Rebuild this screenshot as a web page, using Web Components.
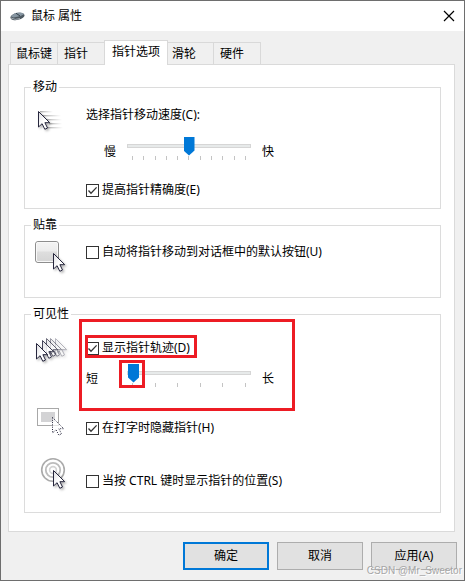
<!DOCTYPE html>
<html lang="zh-CN">
<head>
<meta charset="utf-8">
<meta name="viewport" content="width=device-width, initial-scale=1">
<title>鼠标 属性</title>
<style>
html, body { margin: 0; min-height: 100%; }
body {
  display: flex; min-height: 100vh; background: #f0f0f0; color: #000;
  font: 12px/16px "Noto Sans", "Noto Sans CJK SC", sans-serif;
}
</style>
</head>
<body>
<mouse-dialog></mouse-dialog>

<script>
const define = (name, html, setup) => {
  const template = document.createElement('template');
  template.innerHTML = html;
  customElements.define(name, class extends HTMLElement {
    constructor() {
      super();
      this.attachShadow({ mode: 'open' }).append(template.content.cloneNode(true));
    }
    connectedCallback() { if (setup) setup(this, this.shadowRoot); }
  });
};

/* Icons. "cursor" is shared by most of them. */
const cursor = (x, y, extra = 'fill="url(#g)" stroke="#26263c"') =>
  `<path transform="translate(${x} ${y})" ${extra} d="M0 0V15.5L3.6 12.2L6.3 17.8L9 16.5L6.4 11.2H11.2Z"/>`;
const defs = `<defs>
  <linearGradient id="g" x1="0" y1="0" x2="1" y2="1"><stop offset="0" stop-color="#dcdce0"/><stop offset=".5" stop-color="#fff"/></linearGradient>
  <linearGradient id="b" x1="0" y1="0" x2="0" y2="1"><stop offset="0" stop-color="#f4f4f4"/><stop offset=".45" stop-color="#ececec"/><stop offset=".5" stop-color="#dedede"/><stop offset="1" stop-color="#d4d4d4"/></linearGradient>
  <linearGradient id="f"><stop offset="0" stop-color="#aaa"/><stop offset="1" stop-color="#bbb" stop-opacity="0"/></linearGradient>
  <filter id="s" x="-30%" y="-30%" width="180%" height="180%"><feDropShadow dx="1.5" dy="1.5" stdDeviation="1.2" flood-opacity=".3"/></filter>
</defs>`;
const icons = {
  speed: `<g fill="url(#f)"><rect x="5" y="4" width="13" height="1.4"/><rect x="8" y="8" width="18" height="1.4"/><rect x="11" y="12" width="16" height="1.4"/><rect x="14" y="16" width="13" height="1.4"/><rect x="12" y="20" width="16" height="1.4"/></g><g filter="url(#s)">${cursor(3.5, 4.5)}</g>`,
  snap: `<rect x=".5" y="1.5" width="23" height="21" rx="2.5" fill="url(#b)" stroke="#8d8d8d"/><rect x="1.5" y="2.5" width="21" height="19" rx="1.5" fill="none" stroke="#f8f8f8"/><g filter="url(#s)">${cursor(18.5, 13.5)}</g>`,
  trail: `<g filter="url(#s)"><g opacity=".3">${cursor(20.5, 2.5)}</g><g opacity=".45">${cursor(15.5, 2.5)}</g><g opacity=".65">${cursor(11.5, 2.5)}</g><g opacity=".85">${cursor(7.5, 4.5)}</g>${cursor(1.5, 7.5)}</g>`,
  hide: `<rect x="2.5" y="2.5" width="21" height="17" fill="#fff" stroke="#a8a8a8"/><rect x="6" y="6" width="14" height="10" fill="#d3d3d5"/>${cursor(17.5, 11.5, 'fill="#fff" fill-opacity=".7" stroke="#26263c" stroke-dasharray="1 1.3"')}`,
  locate: `<g fill="none"><circle cx="18" cy="14" r="11.3" stroke="#aaa" stroke-width="1.6"/><circle cx="18" cy="14" r="7.2" stroke="#bcbcbc" stroke-width="1.8"/><circle cx="18" cy="14" r="3.4" stroke="#d4d4d4" stroke-width="1.6"/></g><g filter="url(#s)">${cursor(18.5, 14.5)}</g>`
};

define('option-icon', `
<style>
:host { display: block; width: 36px; height: 36px; }
svg { display: block; overflow: visible; }
</style>
<svg width="36" height="36" viewBox="0 0 36 36" aria-hidden="true"></svg>`,
(el, root) => { root.querySelector('svg').innerHTML = defs + icons[el.getAttribute('name')]; });

define('check-box', `
<style>
:host { display: flex; }
label { display: flex; align-items: center; gap: 3px; white-space: nowrap; }
.box { display: grid; }
.box > * { grid-area: 1 / 1; }
input { appearance: none; box-sizing: border-box; width: 13px; height: 13px; margin: 0; border: 1px solid #333; background: #fff; }
svg { display: none; pointer-events: none; }
input:checked + svg { display: block; }
</style>
<label><span class="box"><input type="checkbox"><svg width="13" height="13" viewBox="0 0 13 13" fill="none" stroke="#333" stroke-width="1.3" aria-hidden="true"><path d="M2.5 6.5L5 9.2L10.6 3.4"/></svg></span><slot></slot></label>`,
(el, root) => { root.querySelector('input').checked = el.hasAttribute('checked'); });

define('range-slider', `
<style>
:host { display: block; }
.title { display: block; margin-bottom: 13px; }
:host(:not([titled])) .title { display: none; }
.row { display: grid; grid-template-columns: 30px 124px auto; justify-content: start; align-items: end; column-gap: 11px; }
.low { text-align: end; }
:host(:not([titled])) .low { text-align: start; }
.rail { height: 24px; }
input { appearance: none; display: block; width: 100%; height: 19px; margin: 0; background: none; }
input::-webkit-slider-runnable-track { height: 4px; box-sizing: border-box; border: 1px solid #d6d6d6; background: #e7eaea; }
input::-webkit-slider-thumb { appearance: none; width: 11px; height: 19px; margin-top: -8px; background: #0078d7; clip-path: polygon(0 0, 100% 0, 100% 74%, 50% 100%, 0 74%); }
.ticks { display: flex; justify-content: space-between; padding: 1px 5px 0; }
.ticks i { width: 1px; height: 4px; background: #c4c4c4; }
</style>
<label class="title" for="r"><slot></slot></label>
<div class="row">
  <span class="low" id="low"></span>
  <div class="rail"><input id="r" type="range" min="0"><div class="ticks"></div></div>
  <span id="high"></span>
</div>`,
(el, root) => {
  const input = root.querySelector('input');
  const steps = Number(el.getAttribute('steps'));
  input.max = steps;
  input.value = el.getAttribute('value');
  root.querySelector('#low').textContent = el.getAttribute('low');
  root.querySelector('#high').textContent = el.getAttribute('high');
  if (!el.hasAttribute('titled')) input.setAttribute('aria-labelledby', 'low high');
  root.querySelector('.ticks').innerHTML = '<i></i>'.repeat(steps + 1);
});

define('option-row', `
<style>
:host { display: grid; grid-template-columns: 36px 1fr; column-gap: 15px; }
.body { padding-top: var(--drop, 0); position: relative; }
</style>
<slot name="icon"></slot><div class="body"><slot></slot></div>`);

define('option-group', `
<style>
:host { display: block; }
fieldset { min-width: 0; margin: 0; border: 1px solid #dcdcdc; padding: var(--pad, 12px) 10px var(--end, 10px); }
legend { height: 16px; margin-left: -4px; padding: 0 2px; }
</style>
<fieldset><legend></legend><slot></slot></fieldset>`,
(el, root) => { root.querySelector('legend').textContent = el.getAttribute('heading'); });

define('title-bar', `
<style>
:host { display: flex; align-items: center; height: 30px; padding: 0 9px; background: #fff; }
svg { display: block; }
h1 { flex: 1; margin: 0 0 0 6px; font: inherit; }
button { border: 0; padding: 0; background: none; }
</style>
<svg width="15" height="10" viewBox="0 0 15 10" aria-hidden="true"><ellipse cx="7.5" cy="5.4" rx="7.2" ry="3.5" transform="rotate(-12 7.5 5.4)" fill="#4d5860"/><path d="M1 5.3Q4 1.8 9 1.5Q13 1 14 3.2Q10 6 5 6.3Q2 6.8 1 5.3Z" fill="#8796a2"/><path d="M6 2.2L10 5" stroke="#33404a"/><path d="M1 7Q5 9.5 10 7.5" stroke="#b5bdc4" stroke-width=".8" fill="none"/></svg>
<h1><slot></slot></h1>
<button type="button" aria-label="关闭"><svg width="12" height="12" viewBox="0 0 12 12" stroke="#000" stroke-width="1.2"><path d="M1 1L11 11M11 1L1 11"/></svg></button>`);

define('tab-strip', `
<style>
:host { display: flex; align-items: flex-end; padding-left: 2px; }
::slotted(button) {
  box-sizing: border-box; width: 47px; height: 22px; margin: 0 -1px 0 0; padding: 0 0 0 4px;
  border: 1px solid #d9d9d9; border-bottom: 0; background: #f0f0f0; color: inherit;
  font: inherit; text-align: left; white-space: nowrap;
}
::slotted(button:nth-child(2)) { width: 48px; padding-left: 6px; }
::slotted(button:first-child) { width: 48px; padding-left: 5px; }
::slotted(button:last-child) { width: 48px; padding-left: 6px; }
::slotted(button[aria-selected="true"]) {
  position: relative; z-index: 1; width: 64px; height: 25px; margin-bottom: -1px; padding: 0 0 3px 7px; background: #fff;
}
</style>
<slot></slot>`);

define('push-button', `
<style>
:host { display: block; }
button { box-sizing: border-box; width: 86px; height: 28px; padding: 0; border: 1px solid #adadad; background: #e1e1e1; color: inherit; font: inherit; }
:host([primary]) button { border: 2px solid #0078d7; }
</style>
<button type="button"><slot></slot></button>`);

define('mouse-dialog', `
<style>
:host { flex: 1; display: flex; flex-direction: column; box-sizing: border-box; position: relative; border: 1px solid #6e6e6e; background: #f0f0f0; }
main { padding: 9px 9px 0 7px; }
.panel { display: grid; gap: 8px; padding: 14px 13px 18px 15px; border: 1px solid #dadada; background: #fff; }
footer { display: flex; justify-content: flex-end; gap: 8px; padding: 10px 7px 9px; }
.speed check-box { margin-top: 22px; }
.snap { --pad: 7px; --end: 21px; }
.snap option-row { --drop: 4px; }
.visible { --pad: 14px; --end: 20px; }
.trail { --drop: 4px; }
.trail range-slider { margin-top: 7px; }
.hide { --drop: 14px; margin-top: 19px; }
.locate { --drop: 17px; margin-top: 14px; }
.mark { position: absolute; box-sizing: border-box; border: 3px solid #ed1c24; pointer-events: none; }
.area { left: -7px; top: -17px; width: 216px; height: 92px; }
.check { left: -1px; top: -1px; width: 112px; height: 23px; }
.thumb { left: 33px; top: 24px; width: 26px; height: 28px; }
.credit { position: absolute; right: 2px; bottom: 1px; color: #a6a6a6; font-family: "Liberation Sans", sans-serif; font-size: 10px; text-shadow: 1px 1px 0 #fff; pointer-events: none; }
</style>
<title-bar>鼠标 属性</title-bar>
<main>
  <tab-strip role="tablist">
    <button type="button" role="tab" aria-selected="false">鼠标键</button>
    <button type="button" role="tab" aria-selected="false">指针</button>
    <button type="button" role="tab" aria-selected="true">指针选项</button>
    <button type="button" role="tab" aria-selected="false">滑轮</button>
    <button type="button" role="tab" aria-selected="false">硬件</button>
  </tab-strip>
  <div class="panel" role="tabpanel">
    <option-group class="speed" heading="移动">
      <option-row>
        <option-icon slot="icon" name="speed"></option-icon>
        <range-slider titled steps="10" value="5" low="慢" high="快">选择指针移动速度(C):</range-slider>
        <check-box checked>提高指针精确度(E)</check-box>
      </option-row>
    </option-group>
    <option-group class="snap" heading="贴靠">
      <option-row>
        <option-icon slot="icon" name="snap"></option-icon>
        <check-box>自动将指针移动到对话框中的默认按钮(U)</check-box>
      </option-row>
    </option-group>
    <option-group class="visible" heading="可见性">
      <option-row class="trail">
        <option-icon slot="icon" name="trail"></option-icon>
        <check-box checked>显示指针轨迹(D)</check-box>
        <range-slider steps="5" value="0" low="短" high="长"></range-slider>
        <div class="mark area"></div>
        <div class="mark check"></div>
        <div class="mark thumb"></div>
      </option-row>
      <option-row class="hide">
        <option-icon slot="icon" name="hide"></option-icon>
        <check-box checked>在打字时隐藏指针(H)</check-box>
      </option-row>
      <option-row class="locate">
        <option-icon slot="icon" name="locate"></option-icon>
        <check-box>当按 CTRL 键时显示指针的位置(S)</check-box>
      </option-row>
    </option-group>
  </div>
</main>
<footer>
  <push-button primary>确定</push-button>
  <push-button>取消</push-button>
  <push-button>应用(A)</push-button>
</footer>
<span class="credit">CSDN @Mr_Sweetor</span>`);
</script>
</body>
</html>
